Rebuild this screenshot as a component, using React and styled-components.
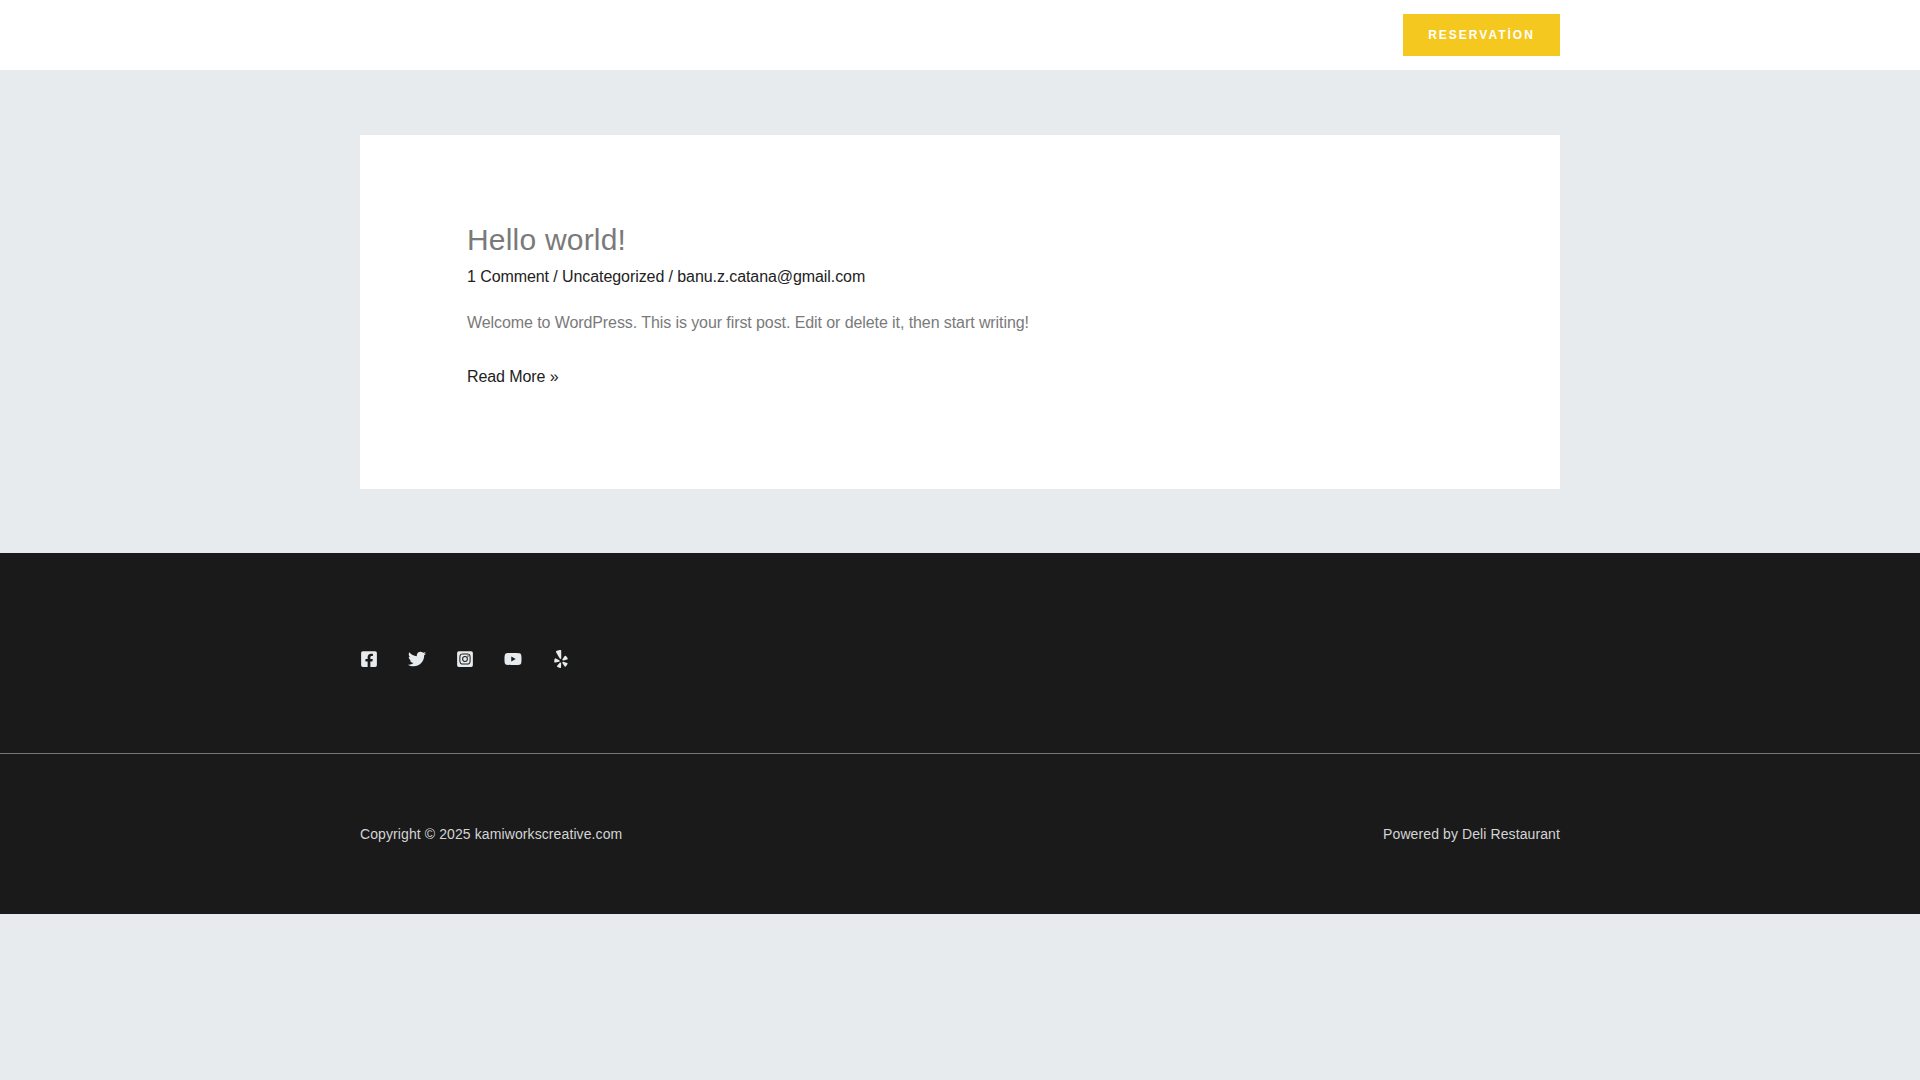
import React from "react";
import styled, { createGlobalStyle } from "styled-components";
import { FaFacebookSquare, FaTwitter, FaInstagramSquare, FaYoutube, FaYelp } from "react-icons/fa";

const Global = createGlobalStyle`
  html, body { margin: 0; padding: 0; }
  body {
    background: #e7ebee;
    font-family: "Liberation Sans", Arial, sans-serif;
    font-size: 16px;
    line-height: 1.6;
    color: #777;
  }
`;

const Header = styled.header`
  height: 70px;
  background: #fff;
`;

const Container = styled.div`
  width: 1200px;
  margin: 0 auto;
`;

const HeaderBar = styled(Container)`
  height: 100%;
  display: flex;
  justify-content: flex-end;
  align-items: center;
`;

const ReserveButton = styled.a`
  display: flex;
  align-items: center;
  justify-content: center;
  width: 157px;
  height: 42px;
  padding-bottom: 1px;
  box-sizing: border-box;
  background: #f5c81f;
  color: #fff;
  font-size: 12px;
  font-weight: 700;
  letter-spacing: 2px;
  line-height: 1;
`;

const Main = styled(Container)`
  padding: 65px 0 64px;
`;

const Card = styled.article`
  background: #fff;
  height: 354px;
  padding: 85px 107px 0;
  box-sizing: border-box;
`;

const Title = styled.h2`
  margin: 0;
  font-size: 30px;
  font-weight: 400;
  line-height: 1.3;
  letter-spacing: 0.2px;
  color: #7a7a7a;
`;

const Meta = styled.div`
  margin-top: 5px;
  font-size: 16px;
  line-height: 26px;
  letter-spacing: -0.08px;
  color: #222;
`;

const Excerpt = styled.p`
  margin: 20px 0 0;
  font-size: 16px;
  line-height: 26px;
  letter-spacing: -0.085px;
  color: #7a7a7a;
`;

const ReadMore = styled.a`
  display: block;
  margin-top: 28px;
  font-size: 16px;
  line-height: 26px;
  letter-spacing: -0.08px;
  color: #222;
`;

const Footer = styled.footer`
  background: #1a1a1a;
`;

const SocialBand = styled.div`
  height: 201px;
  padding-top: 12px;
  box-sizing: border-box;
  border-bottom: 1px solid #777;
`;

const SocialRow = styled(Container)`
  height: 100%;
  display: flex;
  align-items: center;
  gap: 30px;
  color: #e7ebee;
  font-size: 18px;
  svg { display: block; }
`;

const IconSlot = styled.span`
  display: flex;
  width: 18px;
  height: 18px;
  justify-content: center;
  align-items: center;
`;

const Bottom = styled(Container)`
  height: 160px;
  display: flex;
  justify-content: space-between;
  align-items: center;
  font-size: 14px;
  letter-spacing: 0.1px;
  color: #d4d4d4;
`;

export default function App() {
  return (
    <>
      <Global />
      <Header>
        <HeaderBar>
          <ReserveButton>RESERVATİON</ReserveButton>
        </HeaderBar>
      </Header>
      <Main>
        <Card>
          <Title>Hello world!</Title>
          <Meta>1 Comment / Uncategorized / banu.z.catana@gmail.com</Meta>
          <Excerpt>Welcome to WordPress. This is your first post. Edit or delete it, then start writing!</Excerpt>
          <ReadMore>Read More »</ReadMore>
        </Card>
      </Main>
      <Footer>
        <SocialBand>
          <SocialRow>
            <IconSlot><FaFacebookSquare /></IconSlot>
            <IconSlot><FaTwitter /></IconSlot>
            <IconSlot><FaInstagramSquare /></IconSlot>
            <IconSlot><FaYoutube /></IconSlot>
            <IconSlot><FaYelp /></IconSlot>
          </SocialRow>
        </SocialBand>
        <Bottom>
          <span>Copyright © 2025 kamiworkscreative.com</span>
          <span>Powered by Deli Restaurant</span>
        </Bottom>
      </Footer>
    </>
  );
}
